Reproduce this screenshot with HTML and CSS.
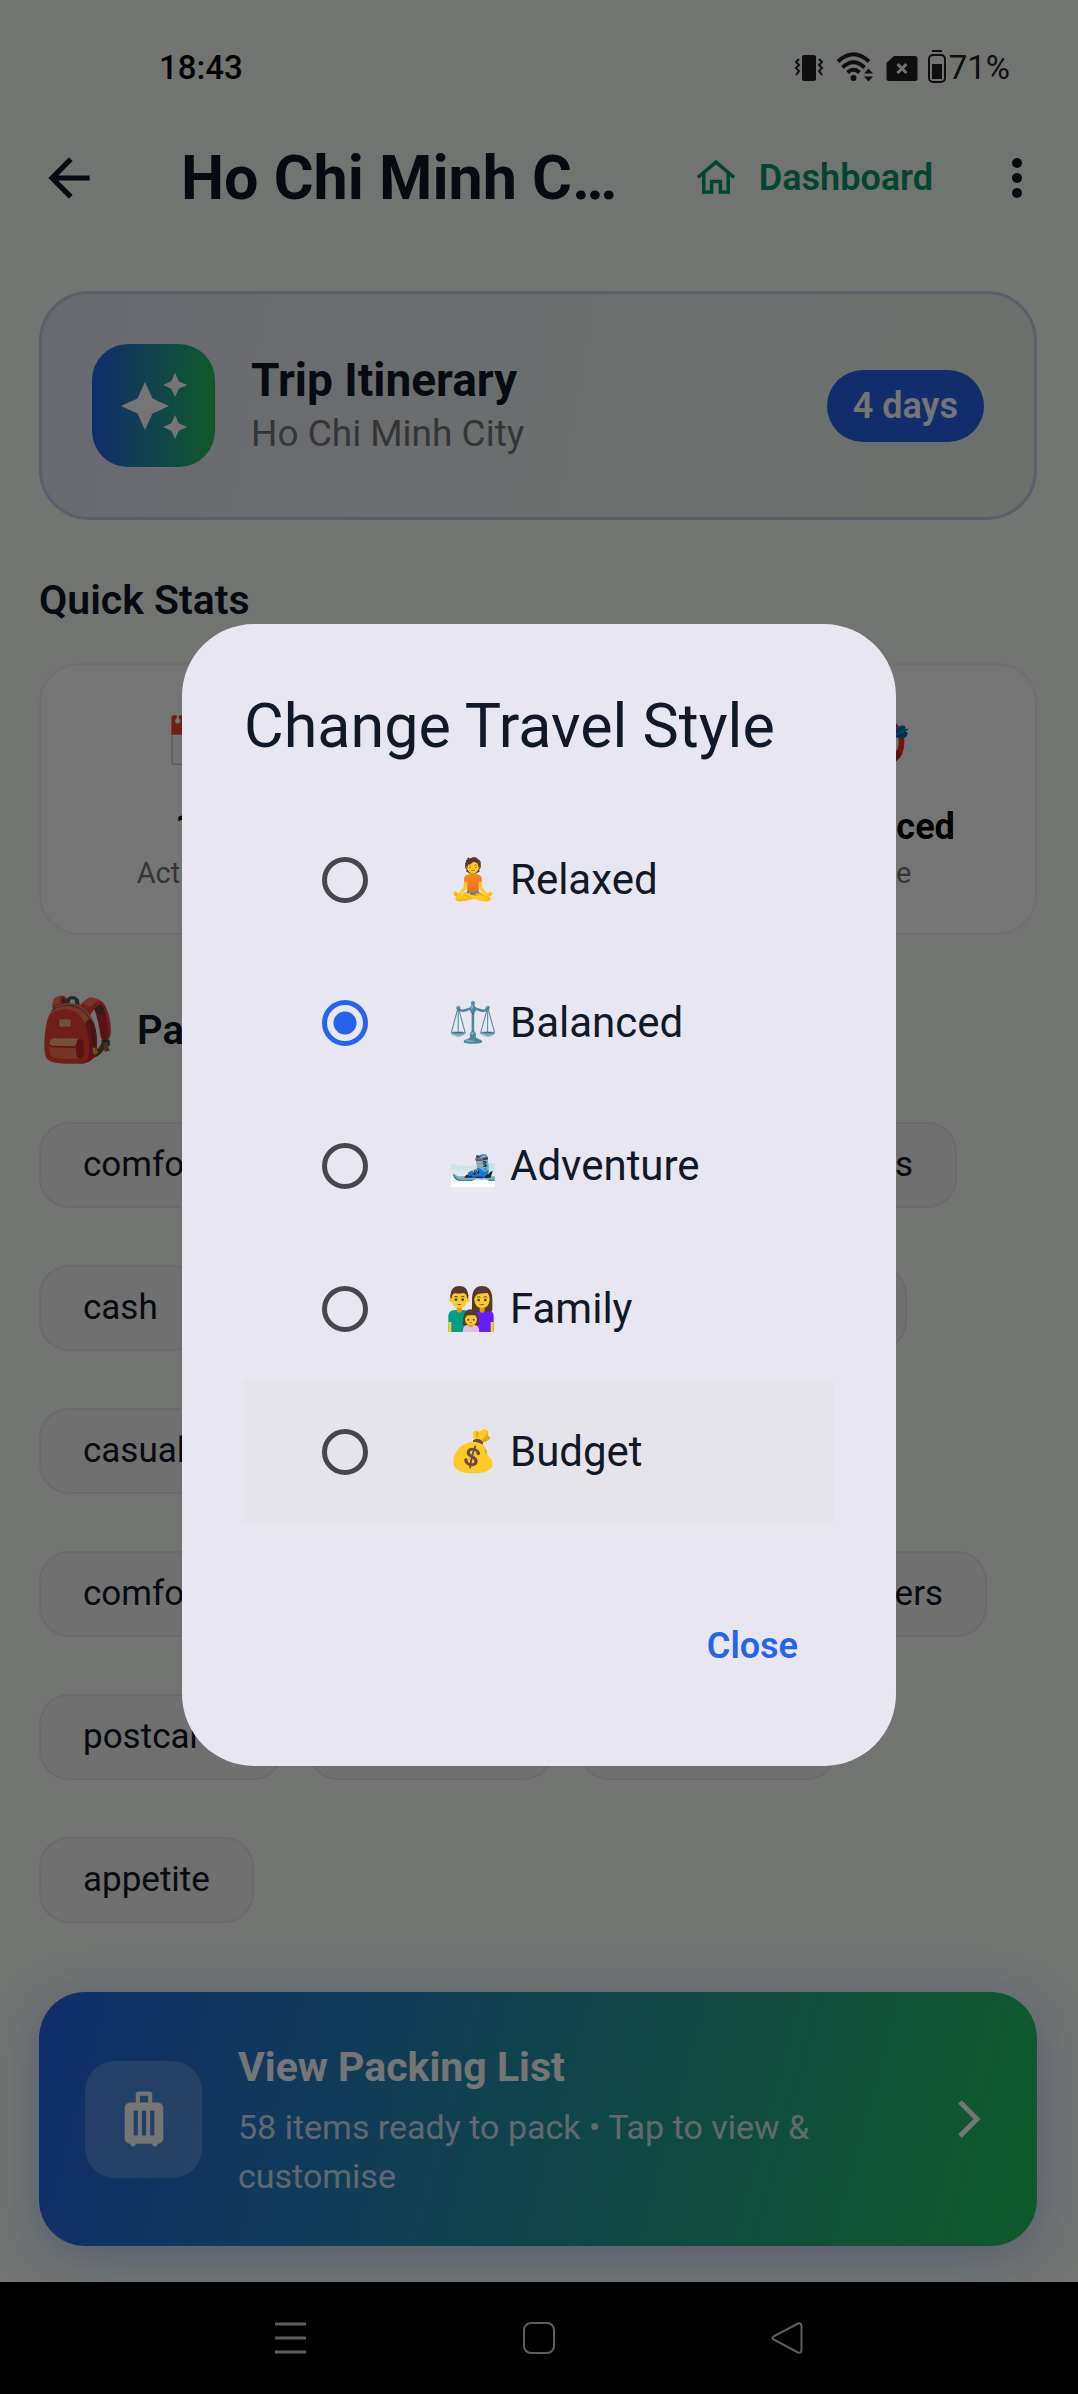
FILE: index.html
```html
<!DOCTYPE html>
<html lang="en">
<head>
<meta charset="utf-8">
<meta name="viewport" content="width=device-width, initial-scale=1">
<title>Ho Chi Minh City – Trip</title>
<link rel="stylesheet" href="styles.css">
</head>
<body>
<div class="screen">
  <div class="status">
    <span class="clock">18:43</span>
    <div class="status-icons">
      <svg width="30" height="30" viewBox="0 0 30 30" fill="none" stroke="#222" stroke-width="2"><rect x="8" y="3" width="14" height="26" rx="2" fill="#222" stroke="none"/><path d="M5 7 2 10l3 3-3 3 3 3-3 4M25 7l3 3-3 3 3 3-3 3 3 4"/></svg>
      <svg class="wifi" width="38" height="30" viewBox="0 0 38 30" fill="none" stroke="#222" stroke-width="4"><path d="M2 9.500Q17.500-5 33 9.500M6.500 15.500Q17.500 5 28.500 15.500M11.500 20.500Q17.500 15 23.500 20.500"/><circle cx="17.500" cy="26" r="3" fill="#222" stroke="none"/><path d="M28 21.500h9l-4.500-5zM28 24.500h9l-4.500 5z" fill="#222" stroke="none"/></svg>
      <svg width="32" height="30" viewBox="0 0 32 30"><path d="M8 4h21a2.500 2.500 0 0 1 2.500 2.500v20A2.500 2.500 0 0 1 29 29H3a2.500 2.500 0 0 1-2.500-2.500V11z" fill="#222"/><path d="m11.500 12 9 9m0-9-9 9" stroke="#f8fcf9" stroke-width="3"/></svg>
      <svg class="battery" width="20" height="34" viewBox="0 0 20 34"><rect x="2" y="5" width="16" height="27" rx="4" fill="none" stroke="#222" stroke-width="2"/><path d="M5 1h10" stroke="#222" stroke-width="2"/><path d="M5 14h10v15H5z" fill="#222"/></svg>
      <span>71%</span>
    </div>
  </div>

  <header class="appbar">
    <button class="icon-btn" aria-label="Back"><svg width="62" height="62" viewBox="0 0 24 24" fill="#111827"><path d="M20 11H7.830l5.590-5.590L12 4l-8 8 8 8 1.410-1.410L7.830 13H20z"/></svg></button>
    <h1>Ho Chi Minh City</h1>
    <a class="dash" href="#"><svg width="42" height="42" viewBox="0 0 24 24" fill="none" stroke="#059669" stroke-width="2"><path d="M1.700 11.700 12 2.900l10.300 8.800M5 9.500V20h4.500v-6h5v6H19V9.500"/></svg>Dashboard</a>
    <button class="icon-btn more" aria-label="More options"><svg width="12" height="42" viewBox="0 0 12 42" fill="#111827"><circle cx="6" cy="6" r="5"/><circle cx="6" cy="21" r="5"/><circle cx="6" cy="36" r="5"/></svg></button>
  </header>

  <main>
    <section class="hero">
      <div class="hero-icon"><svg width="72" height="72" viewBox="0 0 24 24" fill="#fff"><path d="m19 9 1.250-2.750L23 5l-2.750-1.250L19 1l-1.250 2.750L15 5l2.750 1.250zm0 6-1.250 2.750L15 19l2.750 1.250L19 23l1.250-2.750L23 19l-2.750-1.250zm-7.500-5.500L9 4 6.500 9.500 1 12l5.500 2.500L9 20l2.500-5.500L17 12z"/></svg></div>
      <div class="hero-text"><h2>Trip Itinerary</h2><p>Ho Chi Minh City</p></div>
      <span class="pill">4 days</span>
    </section>

    <h3 class="section-title">Quick Stats</h3>
    <section class="stats">
      <div><span class="emoji">📅</span><strong>12</strong><small>Activities</small></div>
      <div><span class="emoji">🗓️</span><strong>4</strong><small>Days</small></div>
      <div><span class="emoji">🎯</span><strong>Balanced</strong><small>Style</small></div>
    </section>

    <div class="packing-title"><span class="pack-emoji">🎒</span><h3>Packing Tips</h3></div>

    <div class="chips">
      <div class="chip-row row-a"><span>comfortable shoes</span><span class="fill">hat</span><span>sunglasses</span></div>
      <div class="chip-row row-b"><span>cash</span><span class="fill">credit card</span><span>phone charger</span></div>
      <div class="chip-row row-c"><span>casual clothes</span><span class="fill">rain jacket</span></div>
      <div class="chip-row row-d"><span>comfortable clothes</span><span class="fill">map</span><span>slippers</span></div>
      <div class="chip-row row-e"><span>postcards</span><span class="fill">camera</span><span>toothbrush</span></div>
      <div class="chip-row"><span>appetite</span></div>
    </div>

    <a class="cta" href="#">
      <span class="cta-icon"><svg width="66" height="66" viewBox="0 0 24 24"><path fill="#fff" fill-rule="evenodd" d="M17 6h-2V3c0-.550-.450-1-1-1h-4c-.550 0-1 .450-1 1v3H7c-1.100 0-2 .900-2 2v11c0 1.100.900 2 2 2 0 .550.450 1 1 1s1-.450 1-1h6c0 .550.450 1 1 1s1-.450 1-1c1.100 0 2-.900 2-2V8c0-1.100-.900-2-2-2zM9.750 18h-1.500V9h1.500zm3 0h-1.500V9h1.500zm.750-12h-3V3.500h3zm2.250 12h-1.500V9h1.500z"/></svg></span>
      <span class="cta-text"><strong>View Packing List</strong><span>58 items ready to pack • Tap to view &amp; customise</span></span>
      <svg width="24" height="40" viewBox="0 0 24 40" fill="none" stroke="#fff" stroke-width="5"><path d="m2 3 17 17L2 37"/></svg>
    </a>
  </main>

  <nav class="sysnav">
    <button aria-label="Recent apps"><svg width="32" height="32" viewBox="0 0 32 32" stroke="#ccc" stroke-width="3"><path d="M0 2h31M0 16h31M0 30h31"/></svg></button>
    <button aria-label="Home"><svg width="32" height="32" viewBox="0 0 32 32" fill="none" stroke="#ccc" stroke-width="2"><rect x="1" y="1" width="30" height="30" rx="7"/></svg></button>
    <button aria-label="Back"><svg width="32" height="32" viewBox="0 0 32 32" fill="none" stroke="#ccc" stroke-width="2"><path d="M2.500 14.500 27 1.500q3.500-1 3.500 3v23q0 4-3.500 3L2.500 17.500q-2-1.500 0-3z"/></svg></button>
  </nav>
</div>

<div class="scrim">
  <form class="dialog" role="dialog" aria-labelledby="dlg-title">
    <h2 id="dlg-title">Change Travel Style</h2>
    <div class="options">
      <label><input type="radio" name="style"><span class="opt-emoji">🧘</span>Relaxed</label>
      <label><input type="radio" name="style" checked><span class="opt-emoji">⚖️</span>Balanced</label>
      <label><input type="radio" name="style"><span class="opt-emoji">🎿</span>Adventure</label>
      <label><input type="radio" name="style"><span class="opt-emoji"><svg width="46" height="46" viewBox="0 0 136 138">
        <path d="M0 138V90q0-16 20-18h26q20 2 20 18v48z" fill="#009e86"/>
        <path d="M0 108h9v30H0z" fill="#ffca28"/>
        <path d="M70 138V90q0-16 20-18h26q20 2 20 18v48z" fill="#651fff"/>
        <path d="M127 108h9v30h-9z" fill="#ffca28"/>
        <path d="M71 78V36Q73 0 101 0t31 36v34q0 8-8 8z" fill="#543930"/>
        <path d="M25 64h16v12q-8 9-16 0zM94 64h15v12q-8 9-15 0z" fill="#e59600"/>
        <path d="M6 42V28Q8 0 33 0t27 28v14z" fill="#543930"/>
        <path d="M10 36q0-12 10-14 14 2 26-1 10 3 10 15v8q-3 22-23 22T10 44z" fill="#ffca28"/>
        <circle cx="8" cy="43" r="6" fill="#ffca28"/><circle cx="58" cy="43" r="6" fill="#ffca28"/>
        <path d="M78 40q2-14 14-17 14-2 26-2 6 8 6 19-1 26-23 26T78 40z" fill="#ffca28"/>
        <g fill="#404040"><circle cx="23" cy="41" r="4"/><circle cx="43" cy="41" r="4"/><circle cx="91" cy="42" r="4"/><circle cx="111" cy="42" r="4"/></g>
        <path d="M25 54q8 7 16 0zM93 54q8 7 16 0z" fill="#795548"/>
        <path d="M18 33q5-4 10 0M38 33q5-4 10 0M86 34q5-4 10 0M106 34q5-4 10 0" fill="none" stroke="#543930" stroke-width="3"/>
        <path d="M43 138q0-20 15-22h20q15 2 15 22z" fill="#e1bee7"/>
        <path d="M42 116q4-8 3-20 2-26 23-26t23 26q-1 12 3 20-10 4-16 0H58q-8 4-16 0z" fill="#543930"/>
        <path d="M50 100q2-10 8-12l22 0q5 4 6 12-1 18-18 18t-18-18z" fill="#ffca28"/>
        <path d="M61 116h13v5q-7 6-13 0z" fill="#e59600"/>
        <g fill="#404040"><circle cx="60" cy="101" r="3"/><circle cx="76" cy="101" r="3"/></g>
        <path d="M62 109q6 5 12 0z" fill="#795548"/>
      </svg></span>Family</label>
      <label class="pressed"><input type="radio" name="style"><span class="opt-emoji">💰</span>Budget</label>
    </div>
    <div class="actions"><button type="button">Close</button></div>
  </form>
</div>
</body>
</html>
```
FILE: styles.css
```css
* { box-sizing: border-box; }
body, h1, h2, h3, p { margin: 0; }
body {
  background: #f8fcf9;
  color: #111827;
  font-family: Roboto, "Noto Color Emoji", sans-serif;
  font-size: 35px;
}
button { border: 0; padding: 0; background: none; font: inherit; color: inherit; cursor: pointer; }
a { color: inherit; text-decoration: none; }
svg { display: block; flex: none; }

.screen { min-height: 100vh; display: flex; flex-direction: column; }

.status {
  height: 134px;
  padding: 0 68px 0 159px;
  display: flex;
  align-items: center;
  justify-content: space-between;
  font-size: 33px;
  color: #000;
}
.clock { font-weight: 500; }
.status-icons { display: flex; align-items: center; gap: 12px; color: #222; }
.status-icons .battery { margin: 0 -10px 0 -3px; }

.appbar { height: 88px; padding: 0 38px; display: flex; align-items: center; }
.appbar h1 {
  flex: 1;
  margin-left: 81px;
  min-width: 0;
  overflow: hidden;
  white-space: nowrap;
  text-overflow: ellipsis;
  font-size: 61px;
  line-height: 80px;
  font-weight: 700;
}
.dash {
  display: flex;
  align-items: center;
  gap: 22px;
  margin: 0 78px 0 70px;
  color: #059669;
  font-size: 36px;
  font-weight: 600;
}
.more { width: 12px; margin-right: 17px; }

main { flex: 1; padding: 69px 41px 36px 39px; }

.hero {
  height: 229px;
  padding: 0 50px;
  display: flex;
  align-items: center;
  gap: 36px;
  border: 3px solid #c5d2e6;
  border-radius: 50px;
  background: linear-gradient(100deg, #e4e6f4, #eaf0f0 45%, #e9f4ec);
}
.hero-icon {
  width: 123px;
  height: 123px;
  display: grid;
  place-items: center;
  border-radius: 36px;
  background: linear-gradient(90deg, #2563eb, #22c55e);
}
.hero-text { flex: 1; }
.hero-text h2 { font-size: 46px; line-height: 56px; font-weight: 700; }
.hero-text p { font-size: 37px; line-height: 52px; color: #757575; }
.pill {
  padding: 0 26px;
  border-radius: 36px;
  background: #2563eb;
  color: #fff;
  font-size: 36px;
  line-height: 72px;
  font-weight: 600;
}

.section-title { margin: 52px 0 35px; font-size: 41px; line-height: 56px; font-weight: 600; }

.stats {
  height: 272px;
  padding: 42px 37px;
  display: grid;
  grid-template-columns: repeat(3, 1fr);
  column-gap: 106px;
  border: 2px solid #f0f0f0;
  border-radius: 40px;
  background: #fff;
}
.stats div { display: flex; flex-direction: column; align-items: center; }
.stats .emoji { height: 96px; font-size: 49px; line-height: 72px; }
.stats strong { font-size: 36px; line-height: 48px; font-weight: 700; color: #000; }
.stats small { font-size: 29px; line-height: 44px; color: #757575; }

.packing-title { display: flex; align-items: center; gap: 24px; margin: 55px 0 52px; height: 80px; }
.packing-title h3 { font-size: 40px; font-weight: 600; }
.pack-emoji { width: 74px; text-align: center; font-size: 62px; line-height: 80px; }

.chips { display: flex; flex-direction: column; gap: 57px; }
.chip-row { display: flex; gap: 25px; }
.chip-row span {
  height: 86px;
  padding: 0 42px;
  border: 2px solid #e4e7e5;
  border-radius: 30px;
  background: #f3f4f4;
  line-height: 82px;
  white-space: nowrap;
}
.chip-row .fill { flex: 1; }
.row-a { width: 92%; }
.row-b { width: 87%; }
.row-c { width: 80%; }
.row-d { width: 95%; }
.row-e { width: 80%; }

.cta {
  margin-top: 69px;
  height: 254px;
  padding: 0 55px 0 46px;
  display: flex;
  align-items: center;
  gap: 36px;
  border-radius: 46px;
  color: #fff;
  background: linear-gradient(105deg, #2563eb, #22c55e);
  box-shadow: 0 10px 50px rgba(37, 99, 235, 0.3);
}
.cta-icon {
  width: 117px;
  height: 117px;
  display: grid;
  place-items: center;
  border-radius: 30px;
  background: rgba(255, 255, 255, 0.2);
}
.cta-text { flex: 1; display: flex; flex-direction: column; gap: 6px; }
.cta-text strong { font-size: 41px; line-height: 60px; font-weight: 700; }
.cta-text span { max-width: 620px; font-size: 34px; line-height: 49px; color: rgba(255, 255, 255, 0.8); }

.sysnav {
  height: 112px;
  padding: 0 275px;
  display: flex;
  align-items: center;
  justify-content: space-between;
  background: #000;
}

.scrim {
  position: fixed;
  inset: 0;
  padding-bottom: 4px;
  display: grid;
  place-items: center;
  background: rgba(0, 0, 0, 0.54);
}
.dialog {
  width: 714px;
  max-width: 90%;
  padding: 62px 62px 84px;
  border-radius: 72px;
  background: #e8e6f0;
}
.dialog h2 { font-size: 61px; line-height: 80px; font-weight: 400; }
.options { margin-top: 42px; }
.options label {
  height: 143px;
  padding-left: 78px;
  display: flex;
  align-items: center;
  font-size: 42px;
}
.options .pressed { background: #e5e4ea; }
.options input {
  appearance: none;
  width: 46px;
  height: 46px;
  margin: 0 80px 0 0;
  border: 5px solid #49454f;
  border-radius: 50%;
}
.options input:checked {
  border-color: #2563eb;
  background: radial-gradient(circle, #2563eb 11px, transparent 12px);
}
.opt-emoji { width: 62px; font-size: 40px; white-space: nowrap; }
.actions { display: flex; justify-content: flex-end; padding: 87px 36px 0 0; }
.actions button { line-height: 72px; font-size: 36px; font-weight: 600; color: #2563eb; }
```
